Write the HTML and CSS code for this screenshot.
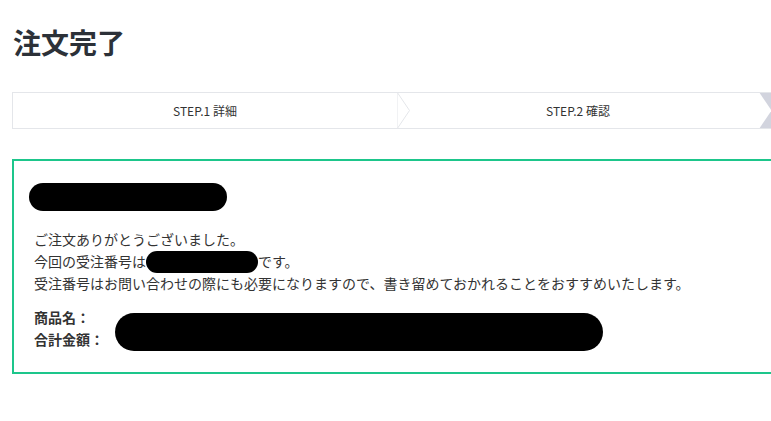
FILE: index.html
```html
<!DOCTYPE html>
<html lang="ja">
<head>
<meta charset="utf-8">
<title>注文完了</title>
<link rel="stylesheet" href="styles.css">
</head>
<body>
<main class="page">
  <h1 class="title">注文完了</h1>

  <ol class="steps">
    <li class="step step-detail">STEP.1 詳細
      <svg class="step-arrow" width="13" height="35" viewBox="0 0 13 35"><polygon points="0,-1 12.5,17.5 0,36" fill="#fff" stroke="#e4e6ea" stroke-width="1"/></svg>
    </li>
    <li class="step step-confirm">STEP.2 確認
      <svg class="step-arrow" width="13" height="35" viewBox="0 0 13 35"><polygon points="0,-1 12.5,17.5 0,36" fill="#fff"/></svg>
    </li>
    <li class="step step-done">STEP.3 完了</li>
  </ol>

  <section class="complete-box">
    <div class="redact redact-heading"></div>
    <p class="message">
      ご注文ありがとうございました。<br>
      今回の受注番号は<span class="redact redact-inline"></span>です。<br>
      受注番号はお問い合わせの際にも必要になりますので、書き留めておかれることをおすすめいたします。
    </p>
    <dl class="summary">
      <div class="summary-row"><dt>商品名：</dt><dd></dd></div>
      <div class="summary-row"><dt>合計金額：</dt><dd></dd></div>
      <div class="redact redact-values"></div>
    </dl>
  </section>
</main>
</body>
</html>
```

FILE: styles.css
```css
html, body {
  margin: 0;
  padding: 0;
  background: #fff;
  overflow: hidden;
}

body {
  font-family: "Noto Sans CJK JP", "Noto Sans", sans-serif;
  color: #333;
}

.page {
  width: 1148px;
  padding: 25px 0 0 12px;
}

.title {
  margin: 0 0 32px 1px;
  font-size: 28px;
  line-height: 35px;
  font-weight: 700;
  color: #2c3138;
}

.steps {
  display: flex;
  margin: 0;
  padding: 0;
  list-style: none;
  border-top: 1px solid #e4e6ea;
  border-bottom: 1px solid #e4e6ea;
  border-left: 1px solid #e4e6ea;
}

.step {
  position: relative;
  height: 35px;
  line-height: 35px;
  text-align: center;
  font-size: 12px;
  color: #333;
  background: #fff;
}

.step-detail {
  width: 384px;
}

.step-confirm {
  width: 362px;
}

.step-done {
  flex: 1;
  background: #d2d4de;
  color: #fff;
}

.step-arrow {
  position: absolute;
  top: 0;
  left: 100%;
  z-index: 1;
  display: block;
}

.complete-box {
  margin-top: 30px;
  border: 2px solid #1dc68b;
  padding: 22px 20px;
}

.redact {
  background: #000;
}

.redact-heading {
  width: 198px;
  height: 28px;
  border-radius: 14px;
  margin-left: -5px;
}

.message {
  margin: 18px 0 0 0;
  font-size: 14px;
  line-height: 21.5px;
  color: #333;
}

.redact-inline {
  display: inline-block;
  width: 112px;
  height: 22px;
  border-radius: 11px;
  vertical-align: -6px;
}

.summary {
  position: relative;
  margin: 11.5px 0 0 0;
}

.summary-row {
  display: flex;
  font-size: 14px;
  line-height: 22px;
  height: 22px;
}

.summary-row dt {
  width: 82px;
  font-weight: 700;
  color: #333;
}

.summary-row dd {
  margin: 0;
}

.redact-values {
  position: absolute;
  left: 81px;
  top: 7px;
  width: 488px;
  height: 38px;
  border-radius: 19px;
}
```
